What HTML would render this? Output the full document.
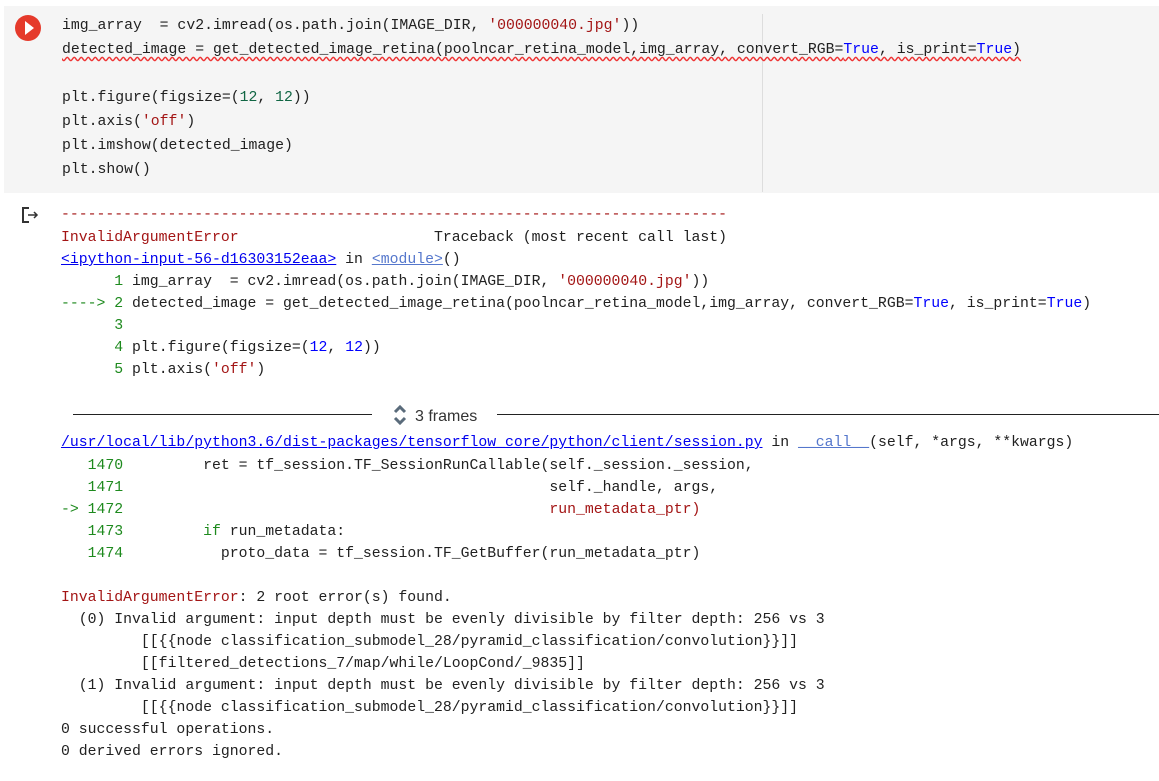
<!DOCTYPE html><html><head><style>
body{margin:0;width:1159px;height:781px;background:#fff;position:relative;overflow:hidden;font-family:"Liberation Mono","Noto Sans CJK KR",monospace;font-size:14.8px;color:#212121}
.l{position:absolute;white-space:pre;line-height:22px;height:22px}
.r{color:#a31515}.g{color:#116644}.b{color:#0000ff}.u{color:#0000ee;text-decoration:underline}.gr{color:#1e8a1e}
.cell{position:absolute;left:4px;top:6px;width:1155px;height:187px;background:#f5f5f5}
</style></head><body>
<div class="cell"></div>
<div style="position:absolute;left:762px;top:14px;width:1px;height:178px;background:#ddd"></div>
<div style="position:absolute;left:15px;top:15px;width:26px;height:26px;border-radius:50%;background:#e53a2b"></div>
<div style="position:absolute;left:25px;top:21px;width:0;height:0;border-left:9px solid #fff;border-top:7px solid transparent;border-bottom:7px solid transparent"></div>
<div class="l" style="left:62px;top:15px">img_array  = cv2.imread(os.path.join(IMAGE_DIR, <span class="r">'000000040.jpg'</span>))</div>
<div class="l" style="left:62px;top:39px;text-decoration:underline wavy #e33;text-underline-offset:3px">detected_image = get_detected_image_retina(poolncar_retina_model,img_array, convert_RGB=<span class="b">True</span>, is_print=<span class="b">True</span>)</div>
<div class="l" style="left:62px;top:87px">plt.figure(figsize=(<span class="g">12</span>, <span class="g">12</span>))</div>
<div class="l" style="left:62px;top:111px">plt.axis(<span class="r">'off'</span>)</div>
<div class="l" style="left:62px;top:135px">plt.imshow(detected_image)</div>
<div class="l" style="left:62px;top:159px">plt.show()</div>
<svg style="position:absolute;left:20px;top:206px" width="20" height="18" viewBox="0 0 20 18"><path d="M9 2H3v14h6" fill="none" stroke="#333" stroke-width="2"/><path d="M8 9h9M14 6l3 3-3 3" fill="none" stroke="#333" stroke-width="1.5"/></svg>
<div class="l r" style="left:61px;top:204px">---------------------------------------------------------------------------</div>
<div class="l" style="left:61px;top:227px"><span class="r">InvalidArgumentError</span>                      Traceback (most recent call last)</div>
<div class="l" style="left:61px;top:249px"><span class="u">&lt;ipython-input-56-d16303152eaa&gt;</span> in <span class="u" style="color:#5577cc">&lt;module&gt;</span>()</div>
<div class="l" style="left:61px;top:271px"><span class="gr">      1</span> img_array  = cv2.imread(os.path.join(IMAGE_DIR, <span class="r">'000000040.jpg'</span>))</div>
<div class="l" style="left:61px;top:293px"><span class="gr">----&gt; 2</span> detected_image = get_detected_image_retina(poolncar_retina_model,img_array, convert_RGB=<span class="b">True</span>, is_print=<span class="b">True</span>)</div>
<div class="l" style="left:61px;top:315px"><span class="gr">      3</span></div>
<div class="l" style="left:61px;top:337px"><span class="gr">      4</span> plt.figure(figsize=(<span class="b">12</span>, <span class="b">12</span>))</div>
<div class="l" style="left:61px;top:359px"><span class="gr">      5</span> plt.axis(<span class="r">'off'</span>)</div>
<div style="position:absolute;left:73px;top:414px;width:299px;height:1px;background:#222"></div>
<div style="position:absolute;left:497px;top:414px;width:662px;height:1px;background:#222"></div>
<svg style="position:absolute;left:392px;top:403px" width="16" height="24" viewBox="0 0 16 24"><path d="M3 9l5-5 5 5M3 15l5 5 5-5" fill="none" stroke="#5a6b7b" stroke-width="3"/></svg>
<div class="l" style="left:415px;top:406px;font-family:'Liberation Sans',sans-serif;font-size:16px;color:#333">3 frames</div>
<div class="l" style="left:61px;top:432px"><span class="u">/usr/local/lib/python3.6/dist-packages/tensorflow_core/python/client/session.py</span> in <span class="u" style="color:#5577cc">__call__</span>(self, *args, **kwargs)</div>
<div class="l" style="left:61px;top:455px"><span class="gr">   1470</span>         ret = tf_session.TF_SessionRunCallable(self._session._session,</div>
<div class="l" style="left:61px;top:477px"><span class="gr">   1471</span>                                                self._handle, args,</div>
<div class="l" style="left:61px;top:499px"><span class="gr">-&gt; 1472</span>                                                <span class="r">run_metadata_ptr)</span></div>
<div class="l" style="left:61px;top:521px"><span class="gr">   1473</span>         <span class="gr">if</span> run_metadata:</div>
<div class="l" style="left:61px;top:543px"><span class="gr">   1474</span>           proto_data = tf_session.TF_GetBuffer(run_metadata_ptr)</div>
<div class="l" style="left:61px;top:587px"><span class="r">InvalidArgumentError</span>: 2 root error(s) found.</div>
<div class="l" style="left:61px;top:609px">  (0) Invalid argument: input depth must be evenly divisible by filter depth: 256 vs 3</div>
<div class="l" style="left:61px;top:631px">	 [[{{node classification_submodel_28/pyramid_classification/convolution}}]]</div>
<div class="l" style="left:61px;top:653px">	 [[filtered_detections_7/map/while/LoopCond/_9835]]</div>
<div class="l" style="left:61px;top:675px">  (1) Invalid argument: input depth must be evenly divisible by filter depth: 256 vs 3</div>
<div class="l" style="left:61px;top:697px">	 [[{{node classification_submodel_28/pyramid_classification/convolution}}]]</div>
<div class="l" style="left:61px;top:719px">0 successful operations.</div>
<div class="l" style="left:61px;top:741px">0 derived errors ignored.</div>
</body></html>
